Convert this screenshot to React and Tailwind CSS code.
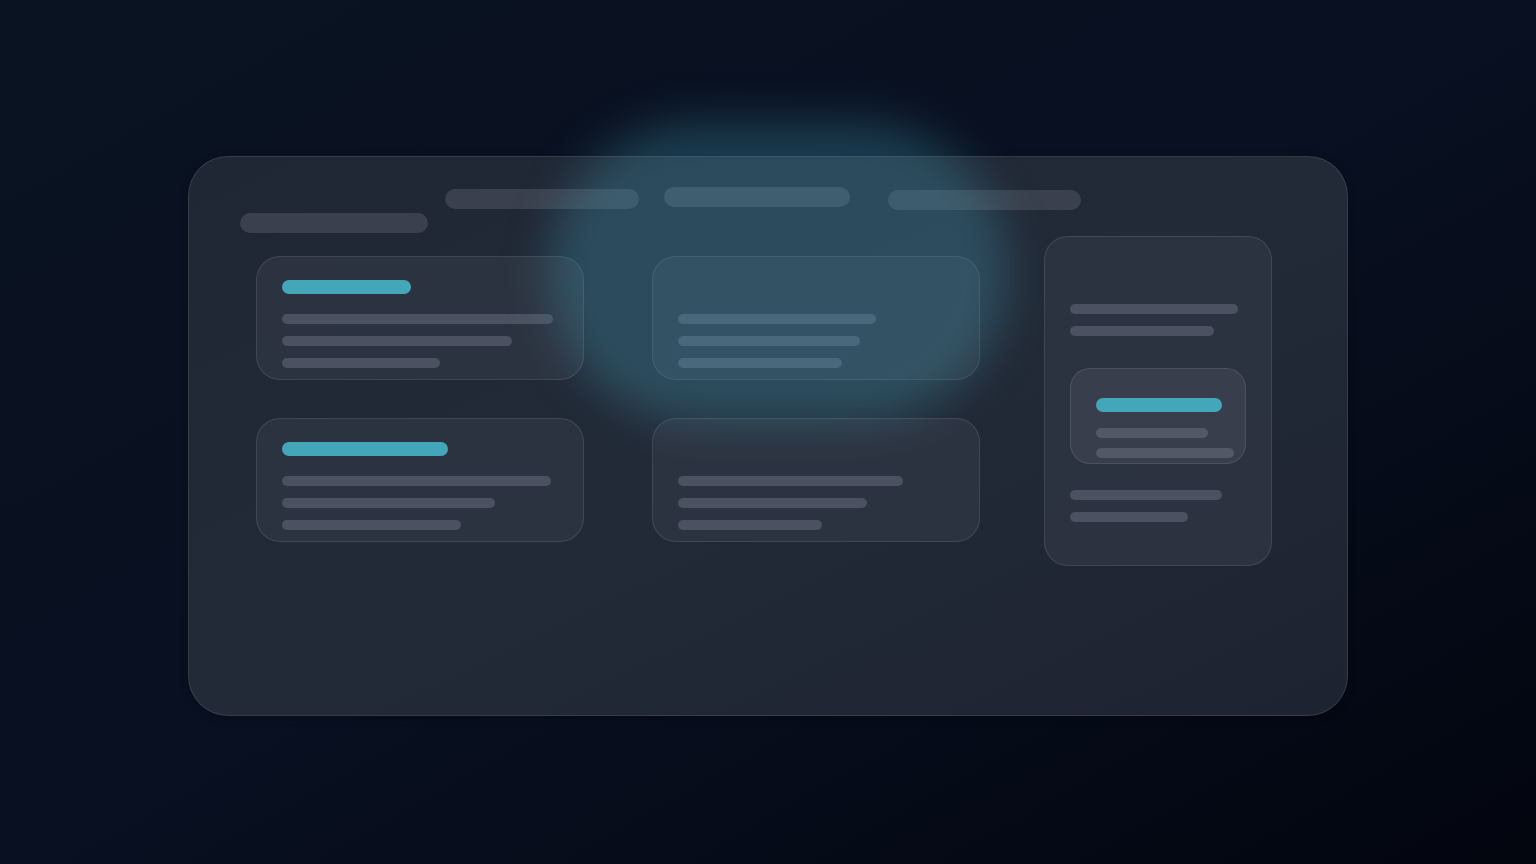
import React from 'react';

const Bar = ({ w, h = 'h-[10px]', color = 'bg-[#4b5160]', className = '' }) => (
  <div className={`${w} ${h} ${color} rounded-full ${className}`} />
);

const Card = ({ accent, bars }) => (
  <div className="w-[328px] h-[124px] rounded-3xl border border-white/10 bg-[#2e3441]/90 px-[25px] pt-[23px]">
    {accent ? (
      <Bar w={accent} h="h-[14px]" color="bg-[#44a6b9]" />
    ) : (
      <div className="h-[14px]" />
    )}
    <div className="mt-[20px] flex flex-col gap-[12px]">
      {bars.map((w, i) => (
        <Bar key={i} w={w} />
      ))}
    </div>
  </div>
);

const SideCard = () => (
  <div className="w-[228px] h-[330px] rounded-3xl border border-white/10 bg-[#2e3441]/90 px-[25px] pt-[67px]">
    <div className="flex flex-col gap-[12px]">
      <Bar w="w-[168px]" />
      <Bar w="w-[144px]" />
    </div>
    <div className="mt-[32px] w-[176px] h-[96px] rounded-[20px] border border-white/10 bg-[#383e4b] px-[25px] pt-[29px]">
      <Bar w="w-[126px]" h="h-[14px]" color="bg-[#44a6b9]" />
      <Bar w="w-[112px]" className="mt-[16px] bg-[#525866]" />
      <Bar w="w-[138px]" className="mt-[10px] bg-[#525866]" />
    </div>
    <div className="mt-[26px] flex flex-col gap-[12px]">
      <Bar w="w-[152px]" />
      <Bar w="w-[118px]" />
    </div>
  </div>
);

export default function App() {
  return (
    <div className="relative w-full h-[864px] overflow-hidden bg-gradient-to-br from-[#0a1322] via-[#091021] to-[#03060f] pt-[156px]">
      <div className="mx-auto w-[1160px] h-[560px] rounded-[40px] border border-white/10 bg-gradient-to-br from-[#1f2634] via-[#222a37] to-[#1e2331] shadow-[0_2px_8px_rgba(0,0,0,0.3)]">
        {/* header pills */}
        <div className="flex items-start pl-[256px] pt-[30px]">
          <Bar w="w-[194px]" h="h-[20px]" color="bg-[#3a404d]" className="mt-[2px]" />
          <Bar w="w-[186px]" h="h-[20px]" color="bg-[#3d4451]" className="ml-[25px]" />
          <Bar w="w-[193px]" h="h-[20px]" color="bg-[#3a404d]" className="ml-[38px] mt-[3px]" />
        </div>
        <Bar w="w-[188px]" h="h-[20px]" color="bg-[#3a404d]" className="ml-[51px] mt-[3px]" />

        {/* content */}
        <div className="flex items-start pl-[67px] mt-[3px]">
          <div className="mt-[20px] flex flex-col gap-[38px]">
            <Card accent="w-[129px]" bars={['w-[271px]', 'w-[230px]', 'w-[158px]']} />
            <Card accent="w-[166px]" bars={['w-[269px]', 'w-[213px]', 'w-[179px]']} />
          </div>
          <div className="ml-[68px] mt-[20px] flex flex-col gap-[38px]">
            <Card bars={['w-[198px]', 'w-[182px]', 'w-[164px]']} />
            <Card bars={['w-[225px]', 'w-[189px]', 'w-[144px]']} />
          </div>
          <div className="ml-[64px]">
            <SideCard />
          </div>
        </div>
      </div>

      {/* teal glow */}
      <div className="pointer-events-none absolute left-[548px] top-[122px] w-[460px] h-[300px] rounded-full bg-[rgba(68,158,185,0.3)] blur-[22px]" />
    </div>
  );
}
